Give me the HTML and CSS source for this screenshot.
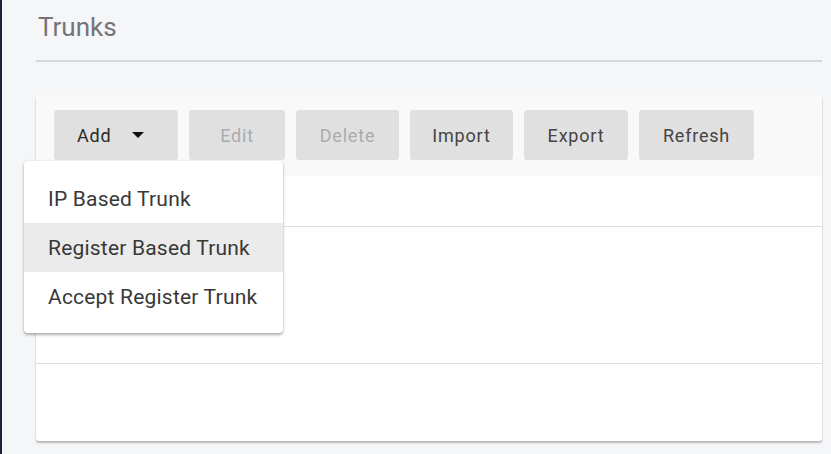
FILE: index.html
```html
<!DOCTYPE html>
<html>
<head>
<meta charset="utf-8">
<link rel="stylesheet" href="styles.css">
</head>
<body>
<div class="page">
  <h1 class="title">Trunks</h1>
  <div class="divider"></div>
  <div class="card">
    <div class="toolbar">
      <div class="add-wrap">
        <button class="btn btn-add">Add <span class="caret"></span></button>
        <div class="menu">
          <div class="menu-item">IP Based Trunk</div>
          <div class="menu-item active">Register Based Trunk</div>
          <div class="menu-item">Accept Register Trunk</div>
        </div>
      </div>
      <button class="btn btn-edit disabled">Edit</button>
      <button class="btn btn-delete disabled">Delete</button>
      <button class="btn btn-import">Import</button>
      <button class="btn btn-export">Export</button>
      <button class="btn btn-refresh">Refresh</button>
    </div>
    <div class="row row-head"></div>
    <div class="row row-body"></div>
    <div class="row row-last"></div>
  </div>
</div>
</body>
</html>
```
FILE: styles.css
```css
* { box-sizing: border-box; }
html, body { margin: 0; padding: 0; }
body {
  width: 831px;
  height: 454px;
  background: #f5f6f8;
  border-left: 2px solid #1c2334;
  font-family: Roboto, "Liberation Sans", sans-serif;
  overflow: hidden;
}
.page {
  padding: 0 9px 0 34px;
}
.title {
  margin: 0;
  padding: 12px 0 0 2px;
  height: 60px;
  font-size: 26px;
  line-height: 30px;
  font-weight: 400;
  color: #747478;
}
.divider {
  height: 2px;
  background: #d6d7da;
}
.card {
  margin-top: 33px;
  background: #fff;
  border-radius: 3px;
  box-shadow: 0 2px 2px rgba(0,0,0,0.25), 0 0 1px rgba(0,0,0,0.08);
  height: 346px;
  display: flex;
  flex-direction: column;
}
.toolbar {
  background: #f9f9f9;
  height: 81px;
  padding: 15px 18px 0;
  display: flex;
  align-items: flex-start;
  gap: 11px;
  border-radius: 3px 3px 0 0;
}
.btn {
  height: 50px;
  border: none;
  border-radius: 3px;
  background: #e0e0e0;
  font-family: Roboto, "Liberation Sans", sans-serif;
  font-size: 18px;
  letter-spacing: 0.8px;
  color: #444;
  padding: 0;
}
.btn.disabled { color: #ababab; }
.add-wrap { position: relative; }
.btn-add { width: 124px; text-align: left; padding-left: 23px; color: #2a2a2a; }
.caret {
  display: inline-block;
  width: 0; height: 0;
  border-left: 6.5px solid transparent;
  border-right: 6.5px solid transparent;
  border-top: 6px solid #111;
  margin-left: 15px;
  vertical-align: 4px;
}
.btn-edit { width: 96px; }
.btn-delete { width: 103px; }
.btn-import { width: 103px; }
.btn-export { width: 104px; }
.btn-refresh { width: 115px; }
.menu {
  position: absolute;
  left: -30px;
  top: 51px;
  width: 259px;
  background: #fff;
  border-radius: 4px;
  padding: 13px 0 12px;
  box-shadow: 0 2px 3px rgba(0,0,0,0.3), 0 0 2px rgba(0,0,0,0.1);
  z-index: 5;
}
.menu-item {
  height: 49px;
  line-height: 49px;
  padding: 1px 0 0 24px;
  font-size: 21px;
  letter-spacing: 0.2px;
  color: #383838;
}
.menu-item.active { background: #ebebeb; }
.row { border-bottom: 1px solid #dedede; }
.row-head { height: 51px; }
.row-body { height: 137px; }
.row-last { border-bottom: none; flex: 1; }
```
